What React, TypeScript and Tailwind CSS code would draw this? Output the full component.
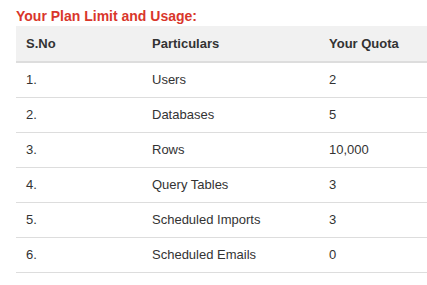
import React from 'react'

const rows = [
  ['1.', 'Users', '2'],
  ['2.', 'Databases', '5'],
  ['3.', 'Rows', '10,000'],
  ['4.', 'Query Tables', '3'],
  ['5.', 'Scheduled Imports', '3'],
  ['6.', 'Scheduled Emails', '0'],
]

export default function App() {
  return (
    <div className="min-h-screen bg-white pl-4 pt-[6px] font-['Liberation_Sans',Arial,sans-serif] text-[13px] text-[#333]">
      <h2 className="text-[14px] font-bold leading-[20px] text-[#d9362b]">Your Plan Limit and Usage:</h2>
      <table className="w-[411px] table-fixed border-collapse">
        <colgroup>
          <col className="w-[126px]" />
          <col className="w-[177px]" />
          <col className="w-[108px]" />
        </colgroup>
        <thead>
          <tr className="h-[36px] border-b-2 border-[#dddddd] bg-[#f1f1f1] text-left font-bold">
            <th className="px-[10px]">S.No</th>
            <th className="px-[10px]">Particulars</th>
            <th className="px-[10px]">Your Quota</th>
          </tr>
        </thead>
        <tbody>
          {rows.map((r) => (
            <tr key={r[0]} className="h-[35px] border-b border-[#dddddd]">
              <td className="px-[10px]">{r[0]}</td>
              <td className="px-[10px]">{r[1]}</td>
              <td className="px-[10px]">{r[2]}</td>
            </tr>
          ))}
        </tbody>
      </table>
    </div>
  )
}
